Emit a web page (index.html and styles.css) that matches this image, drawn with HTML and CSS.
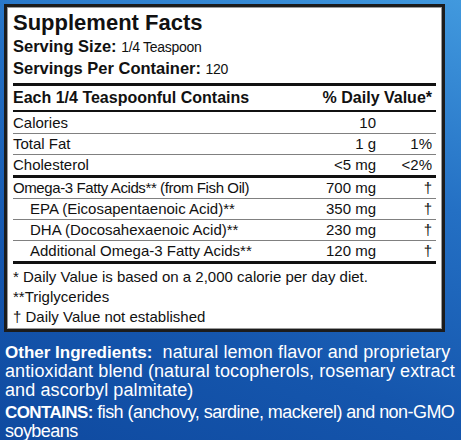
FILE: index.html
```html
<!DOCTYPE html>
<html lang="en">
<head>
    <meta charset="UTF-8">
    <meta name="viewport" content="width=device-width, initial-scale=1.0">
    <title>Supplement Facts</title>
    <link rel="stylesheet" href="styles.css">
</head>
<body>
    <div class="label">
        <div class="facts">
            <h1>Supplement Facts</h1>
            <div class="serving"><b>Serving Size:</b> <span>1/4 Teaspoon</span></div>
            <div class="serving"><b>Servings Per Container:</b> <span>120</span></div>

            <div class="row head thick-top">
                <div class="name">Each 1/4 Teaspoonful Contains</div>
                <div class="dv-head">% Daily Value*</div>
            </div>

            <div class="row first">
                <div class="name">Calories</div>
                <div class="amt">10</div>
                <div class="dv"></div>
            </div>
            <div class="row thin-top">
                <div class="name">Total Fat</div>
                <div class="amt">1 g</div>
                <div class="dv">1%</div>
            </div>
            <div class="row thin-top">
                <div class="name">Cholesterol</div>
                <div class="amt">&lt;5 mg</div>
                <div class="dv">&lt;2%</div>
            </div>

            <div class="row thick-top">
                <div class="name tight">Omega-3 Fatty Acids** (from Fish Oil)</div>
                <div class="amt">700 mg</div>
                <div class="dv">†</div>
            </div>
            <div class="row thin-top sub">
                <div class="name">EPA (Eicosapentaenoic Acid)**</div>
                <div class="amt">350 mg</div>
                <div class="dv">†</div>
            </div>
            <div class="row thin-top sub">
                <div class="name">DHA (Docosahexaenoic Acid)**</div>
                <div class="amt">230 mg</div>
                <div class="dv">†</div>
            </div>
            <div class="row thin-top sub">
                <div class="name">Additional Omega-3 Fatty Acids**</div>
                <div class="amt">120 mg</div>
                <div class="dv">†</div>
            </div>

            <div class="notes">
                <p>* Daily Value is based on a 2,000 calorie per day diet.</p>
                <p>**Triglycerides</p>
                <p>† Daily Value not established</p>
            </div>
        </div>

        <p class="other ingredients"><b>Other Ingredients:</b>&nbsp; natural lemon flavor and proprietary<br>antioxidant blend (natural tocopherols, rosemary extract<br>and ascorbyl palmitate)</p>
        <p class="other contains"><b>CONTAINS:</b> fish (anchovy, sardine, mackerel) and non-GMO<br>soybeans</p>
    </div>
</body>
</html>
```

FILE: styles.css
```css
body {
    margin: 0;
    width: 461px;
    height: 440px;
    overflow: hidden;
    font-family: 'Liberation Sans', Arial, sans-serif;
    background: linear-gradient(200deg, #4199de 0%, #2470c4 35%, #1556ad 70%, #0f4aa0 100%);
}

.label {
    padding: 4px 0 0 0;
}

.facts {
    margin: 0 16px 0 4px;
    background: white;
    border: 3px solid #1c1c1c;
    box-shadow: inset 0 0 0 1px #9a9a9a;
    padding: 3px 6px 2px 6px;
    color: #111;
}

h1 {
    margin: 0;
    font-size: 22px;
    line-height: 26px;
    font-weight: bold;
}

.serving {
    font-size: 16.5px;
    line-height: 21px;
}

.serving span {
    font-size: 14px;
    letter-spacing: -0.3px;
}

.row {
    display: grid;
    grid-template-columns: 1fr 80px 56px;
    font-size: 15px;
    line-height: 20px;
    padding-right: 4px;
}

.row .amt,
.row .dv {
    text-align: right;
}

.row .tight {
    letter-spacing: -0.4px;
}

.head {
    grid-template-columns: 1fr auto;
    font-weight: bold;
    font-size: 16px;
    margin-top: 3px;
    line-height: 24px;
    border-bottom: 2px solid #111;
}

.thick-top {
    border-top: 3px solid #111;
}

.thin-top {
    border-top: 1px solid #808080;
}

.first {
    line-height: 21px;
}

.sub .name {
    padding-left: 17px;
}

.notes {
    border-top: 3px solid #111;
    padding-top: 3px;
}

.notes p {
    margin: 0;
    font-size: 15px;
    line-height: 20px;
}

.other {
    margin: 0;
    padding: 0 0 0 5px;
    color: white;
    font-size: 18px;
    line-height: 19px;
    white-space: nowrap;
}

.ingredients {
    margin-top: 11px;
    letter-spacing: 0.1px;
}

.ingredients b {
    font-size: 17px;
    letter-spacing: 0;
}

.contains {
    margin-top: 3px;
    letter-spacing: -0.55px;
}

.contains b {
    font-size: 17px;
    letter-spacing: -0.6px;
}
```
